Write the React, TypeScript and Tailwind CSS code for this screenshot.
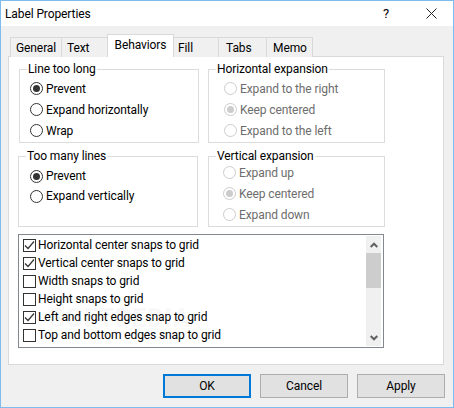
const font = "[font-family:Roboto,sans-serif]"

function Radio({ label, checked, disabled }: { label: string; checked?: boolean; disabled?: boolean }) {
  return (
    <div className={`flex items-center gap-[3px] h-[21px] ${disabled ? 'text-[#6d6d6d]' : 'text-black'}`}>
      <span className={`flex items-center justify-center w-[13px] h-[13px] rounded-full border bg-white ${disabled ? 'border-[#cccccc]' : 'border-[#333333]'}`}>
        {checked && <span className={`w-[7px] h-[7px] rounded-full ${disabled ? 'bg-[#cccccc]' : 'bg-[#333333]'}`} />}
      </span>
      <span>{label}</span>
    </div>
  )
}

function Group({ title, className, inner, children }: { title: string; className: string; inner: string; children: React.ReactNode }) {
  return (
    <fieldset className={`border border-[#dcdcdc] ${className}`}>
      <legend className="ml-[7px] px-px leading-[14px] text-black">{title}</legend>
      <div className={inner}>{children}</div>
    </fieldset>
  )
}

function Check({ label, checked }: { label: string; checked?: boolean }) {
  return (
    <div className="relative z-10 flex items-center gap-[2px] h-[18px]">
      <span className="flex items-center justify-center w-[13px] h-[13px] border border-[#333333] bg-white">
        {checked && (
          <svg width="11" height="11" viewBox="0 0 11 11" fill="none" stroke="#333333" strokeWidth="1.2">
            <path d="M1 5.5 L4 8.5 L10 1.5" />
          </svg>
        )}
      </span>
      <span>{label}</span>
    </div>
  )
}

function Tab({ label, className }: { label: string; className: string }) {
  return (
    <div className={`flex items-center h-[20px] bg-[#f0f0f0] border border-b-0 border-[#d9d9d9] -ml-px ${className}`}>
      {label}
    </div>
  )
}

function Button({ label, primary }: { label: string; primary?: boolean }) {
  return (
    <button className={`w-[88px] h-[24px] bg-[#e1e1e1] text-black ${primary ? 'border-2 border-[#0078d7]' : 'border border-[#adadad]'}`}>
      {label}
    </button>
  )
}

export default function App() {
  return (
    <div className={`w-[454px] h-[408px] flex flex-col border border-[#7ebcf0] bg-[#f0f0f0] text-[12px] leading-[16px] tracking-[-0.1px] text-black overflow-hidden ${font}`}>
      <div className="flex items-center h-[25px] shrink-0 bg-white pl-[4px]">
        <span className="text-[12px]">Label Properties</span>
        <span className="ml-auto mr-[37px] text-[13px]">?</span>
        <svg className="mr-[16px] mb-px" width="11" height="11" viewBox="0 0 11 11" stroke="#222222" strokeWidth="1">
          <path d="M0.5 0.5 L10.5 10.5 M10.5 0.5 L0.5 10.5" />
        </svg>
      </div>

      <div className="flex flex-col mx-[7px] mt-[8px]">
        <div className="flex items-end h-[23px] pl-[2px] relative z-10 -mb-px">
          <Tab label="General" className="w-[52px] ml-0 pl-[5px]" />
          <Tab label="Text" className="w-[47px] pl-[5px]" />
          <div className="flex items-center justify-center w-[67px] h-[23px] -ml-px pb-[3px] bg-white border border-b-0 border-[#d9d9d9] relative z-10">
            Behaviors
          </div>
          <Tab label="Fill" className="w-[46px] pl-[4px]" />
          <Tab label="Tabs" className="w-[49px] pl-[7px]" />
          <Tab label="Memo" className="w-[47px] pl-[6px]" />
        </div>

        <div className="flex flex-col w-[436px] h-[309px] bg-white border border-[#d9d9d9] pl-[10px] pt-[5px]">
          <div className="flex gap-[9px]">
            <Group title="Line too long" className="w-[180px] h-[81px]" inner="pl-[10px] pt-[2px]">
              <Radio label="Prevent" checked />
              <Radio label="Expand horizontally" />
              <Radio label="Wrap" />
            </Group>
            <Group title="Horizontal expansion" className="w-[177px] h-[81px]" inner="pl-[15px] pt-[2px]">
              <Radio label="Expand to the right" disabled />
              <Radio label="Keep centered" checked disabled />
              <Radio label="Expand to the left" disabled />
            </Group>
          </div>
          <div className="flex gap-[10px] mt-[6px] -ml-px">
            <Group title="Too many lines" className="w-[180px] h-[78px]" inner="pl-[11px] pt-[3px] [&>div]:h-[20px]">
              <Radio label="Prevent" checked />
              <Radio label="Expand vertically" />
            </Group>
            <Group title="Vertical expansion" className="w-[177px] h-[78px]" inner="pl-[14px] -mt-px">
              <Radio label="Expand up" disabled />
              <Radio label="Keep centered" checked disabled />
              <Radio label="Expand down" disabled />
            </Group>
          </div>
          <div className="relative flex w-[366px] h-[114px] mt-[7px] -ml-px bg-white border border-[#828790] pl-[4px] pt-[1px] overflow-hidden">
            <span className="absolute left-[30px] top-[70px] text-[25px] leading-[28px] tracking-[1px] font-bold text-[#f8f8f8] pointer-events-none">SOFTPEDIA</span>
            <div className="flex-1">
              <Check label="Horizontal center snaps to grid" checked />
              <Check label="Vertical center snaps to grid" checked />
              <Check label="Width snaps to grid" />
              <Check label="Height snaps to grid" />
              <Check label="Left and right edges snap to grid" checked />
              <Check label="Top and bottom edges snap to grid" />
            </div>
            <div className="flex flex-col w-[15px] h-[110px] mr-[2px] bg-[#f0f0f0]">
              <div className="flex items-center justify-center h-[17px]">
                <svg width="8" height="6" viewBox="0 0 8 6" fill="none" stroke="#606060" strokeWidth="2">
                  <path d="M0.7 5 L4 1.7 L7.3 5" />
                </svg>
              </div>
              <div className="h-[35px] bg-[#cdcdcd]" />
              <div className="flex items-center justify-center h-[17px] mt-auto">
                <svg width="8" height="6" viewBox="0 0 8 6" fill="none" stroke="#606060" strokeWidth="2">
                  <path d="M0.7 1 L4 4.3 L7.3 1" />
                </svg>
              </div>
            </div>
          </div>
        </div>
      </div>

      <div className="flex justify-end gap-[9px] mt-[9px] pr-[8px]">
        <Button label="OK" primary />
        <Button label="Cancel" />
        <Button label="Apply" />
      </div>
    </div>
  )
}
